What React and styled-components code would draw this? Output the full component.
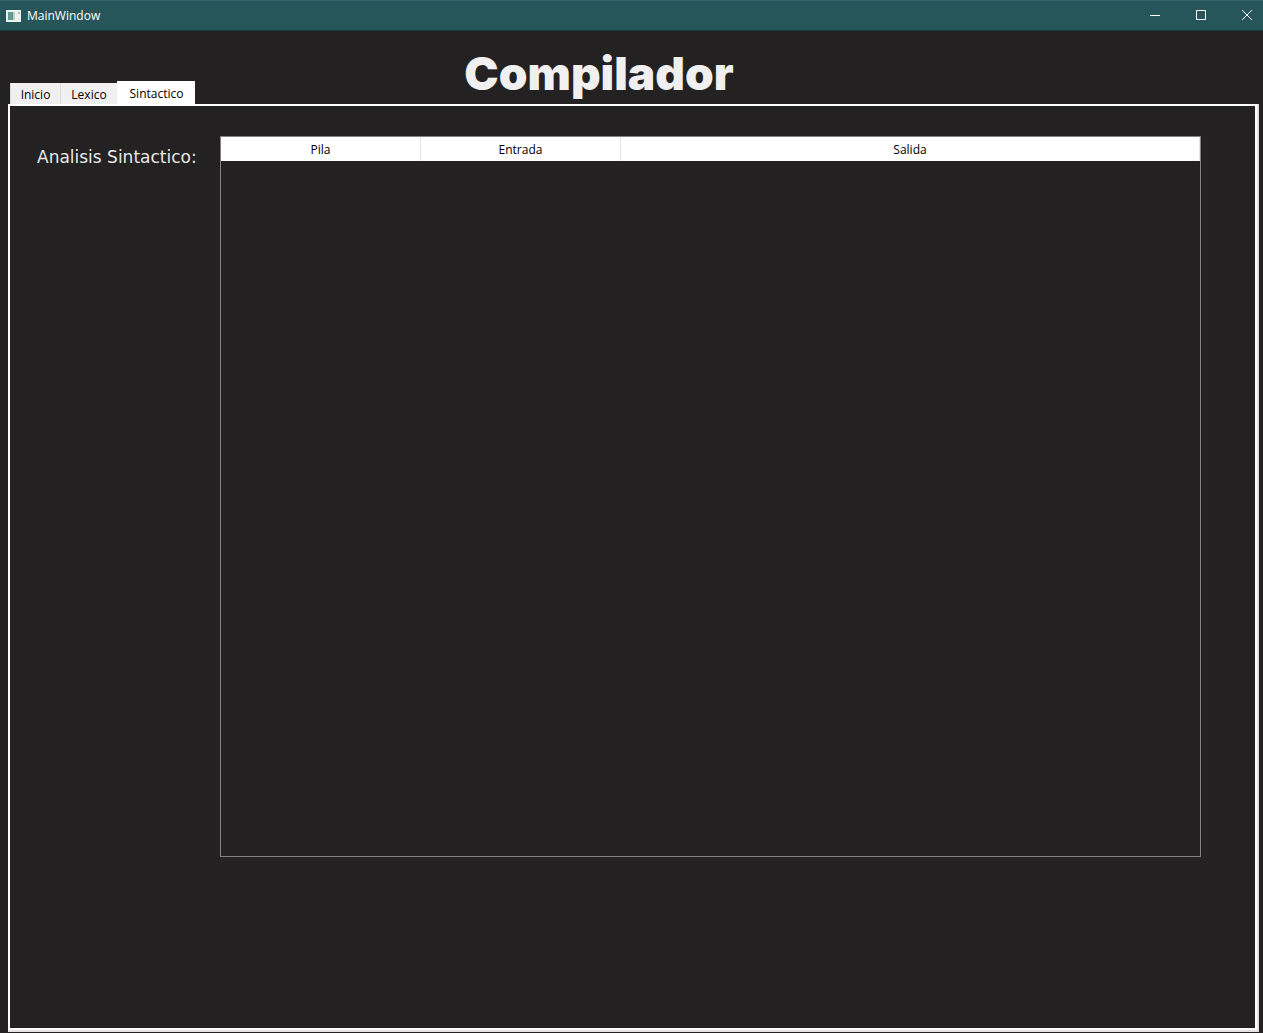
import React, { useState } from "react";
import styled, { createGlobalStyle } from "styled-components";

const GlobalStyle = createGlobalStyle`
  *, *::before, *::after { box-sizing: border-box; }
  body { margin: 0; background: #232122; }
`;

const ui = `"Open Sans", "Noto Sans", sans-serif`;

const Window = styled.div`
  display: flex;
  flex-direction: column;
  min-height: 100vh;
  background: #232122;
  color: #f0f0f0;
  font: 12px/16px ${ui};
`;

const TitleBar = styled.header`
  display: flex;
  align-items: center;
  gap: 6px;
  height: 31px;
  padding-left: 6px;
  background: #26565a;
  border-top: 1px solid #33666a;
  border-bottom: 1px solid #1c3b3e;
`;

const WindowName = styled.span`
  flex: 1;
  color: #fff;
`;

const WindowControls = styled.div`
  display: flex;
  align-self: stretch;
  margin-right: -7px;
`;

const ControlButton = styled.button`
  display: flex;
  align-items: center;
  justify-content: center;
  width: 46px;
  padding: 0 0 2px;
  border: 0;
  background: transparent;
  color: #fff;
`;

const Heading = styled.div`
  display: flex;
  align-items: flex-end;
  height: 73px;
  padding: 0 260px 0 10px;
`;

const TabList = styled.div`
  display: flex;
  align-items: flex-end;
  flex: none;
`;

const Tab = styled.button`
  position: relative;
  width: ${(p) => p.$width}px;
  height: ${(p) => (p.$selected ? 24 : 21)}px;
  margin-bottom: ${(p) => (p.$selected ? -1 : 0)}px;
  padding: 2px 0 0;
  border: 0;
  border-left: 1px solid ${(p) => (p.$selected ? "#fff" : "#dcdcdc")};
  background: ${(p) => (p.$selected ? "#fff" : "#f0f0f0")};
  color: #000;
  font: 12px/16px ${ui};
  text-align: center;
`;

const Title = styled.h1`
  flex: 1;
  margin: 0;
  color: #f0f0f0;
  font: 900 46px/62px Inter, sans-serif;
  text-align: center;
`;

const PaneShade = styled.div`
  display: flex;
  flex-direction: column;
  flex: 1;
  margin: 0 4px 1px 8px;
  border: solid #e3e3e3;
  border-width: 0 2px 2px 0;
`;

const Pane = styled.main`
  display: flex;
  flex: 1;
  align-items: flex-start;
  gap: 20px;
  padding: 30px 54px 30px 27px;
  border: 2px solid #fff;
`;

const PaneLabel = styled.span`
  flex: none;
  width: 163px;
  padding-top: 11px;
  color: #e8e8e8;
  font: 17px/20px "DejaVu Sans", sans-serif;
  white-space: nowrap;
`;

const TableFrame = styled.div`
  flex: 1;
  height: 721px;
  border: 1px solid #828282;
`;

const Table = styled.table`
  width: 100%;
  border-collapse: separate;
  border-spacing: 0;
  table-layout: fixed;
`;

const ColumnHeader = styled.th`
  width: ${(p) => p.$width || "auto"};
  height: 24px;
  padding: 2px 0 0;
  border-right: 1px solid #e5e5e5;
  background: #fff;
  color: #000;
  font: 12px/16px ${ui};
`;

const tabs = [
  { name: "Inicio", width: 50 },
  { name: "Lexico", width: 57 },
  { name: "Sintactico", width: 78 },
];

const columns = [
  { name: "Pila", width: "200px" },
  { name: "Entrada", width: "200px" },
  { name: "Salida" },
];

function AppIcon() {
  return (
    <svg width="15" height="12" viewBox="0 0 15 12" aria-hidden="true">
      <rect width="15" height="12" fill="#eef3f2" />
      <rect x="2" y="2" width="5" height="8" fill="#5f9a90" />
      <rect x="7" y="2" width="2" height="8" fill="#b9d3cf" />
      <rect x="12" y="2" width="2" height="2" fill="#a5c1be" />
    </svg>
  );
}

function Glyph({ d }) {
  return (
    <svg width="10" height="10" viewBox="0 0 10 10" fill="none" stroke="currentColor" aria-hidden="true">
      <path d={d} />
    </svg>
  );
}

export default function App() {
  const [selected, setSelected] = useState("Sintactico");

  return (
    <Window>
      <GlobalStyle />
      <TitleBar>
        <AppIcon />
        <WindowName>MainWindow</WindowName>
        <WindowControls>
          <ControlButton aria-label="Minimizar"><Glyph d="M0 5.5H10" /></ControlButton>
          <ControlButton aria-label="Maximizar"><Glyph d="M.5 .5H9.5V9.5H.5Z" /></ControlButton>
          <ControlButton aria-label="Cerrar"><Glyph d="M0 0L10 10M10 0L0 10" /></ControlButton>
        </WindowControls>
      </TitleBar>
      <Heading>
        <TabList role="tablist">
          {tabs.map((tab) => (
            <Tab
              key={tab.name}
              role="tab"
              aria-selected={selected === tab.name}
              $selected={selected === tab.name}
              $width={tab.width}
              onClick={() => setSelected(tab.name)}
            >
              {tab.name}
            </Tab>
          ))}
        </TabList>
        <Title>Compilador</Title>
      </Heading>
      <PaneShade>
        <Pane>
          <PaneLabel id="analysis-label">Analisis Sintactico:</PaneLabel>
          <TableFrame>
            <Table aria-labelledby="analysis-label">
              <thead>
                <tr>
                  {columns.map((column) => (
                    <ColumnHeader key={column.name} scope="col" $width={column.width}>
                      {column.name}
                    </ColumnHeader>
                  ))}
                </tr>
              </thead>
              <tbody />
            </Table>
          </TableFrame>
        </Pane>
      </PaneShade>
    </Window>
  );
}
